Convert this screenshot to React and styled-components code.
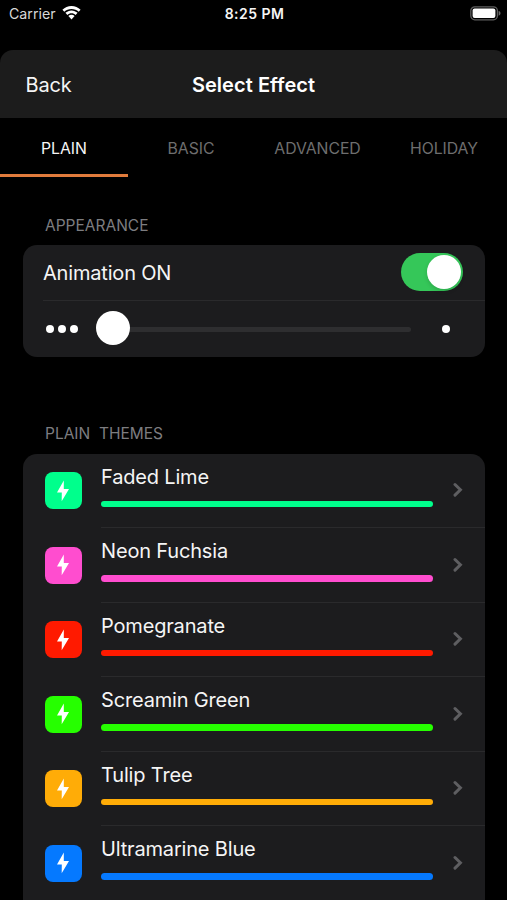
import { useState } from "react";
import styled, { createGlobalStyle } from "styled-components";

const themes = [
    { name: "Faded Lime", color: "#00FF8C" },
    { name: "Neon Fuchsia", color: "#FF4DCF" },
    { name: "Pomegranate", color: "#FF1A00" },
    { name: "Screamin Green", color: "#26FF00" },
    { name: "Tulip Tree", color: "#FFAC07" },
    { name: "Ultramarine Blue", color: "#0579FF" },
];

const tabs = ["PLAIN", "BASIC", "ADVANCED", "HOLIDAY"];

export default function App() {
    const [activeTab, setActiveTab] = useState("PLAIN");
    const [animated, setAnimated] = useState(true);

    return (
        <Screen>
            <GlobalStyle />
            <StatusBar>
                <Carrier>
                    Carrier
                    <WifiIcon />
                </Carrier>
                <Clock>8:25 PM</Clock>
                <BatterySlot>
                    <BatteryIcon />
                </BatterySlot>
            </StatusBar>
            <Header>
                <BackButton>Back</BackButton>
                <HeaderTitle>Select Effect</HeaderTitle>
            </Header>
            <TabBar>
                {tabs.map((tab) => (
                    <Tab key={tab} $active={tab === activeTab} onClick={() => setActiveTab(tab)}>
                        {tab}
                    </Tab>
                ))}
            </TabBar>
            <SectionTitle>APPEARANCE</SectionTitle>
            <AppearanceCard>
                <AnimationRow>
                    <AnimationLabel>Animation {animated ? "ON" : "OFF"}</AnimationLabel>
                    <Switch $on={animated} onClick={() => setAnimated(!animated)}>
                        <SwitchKnob />
                    </Switch>
                </AnimationRow>
                <SliderRow>
                    <Dots>
                        <Dot />
                        <Dot />
                        <Dot />
                    </Dots>
                    <Slider>
                        <SliderThumb />
                        <SliderTrack />
                    </Slider>
                    <Dot />
                </SliderRow>
            </AppearanceCard>
            <ThemesTitle>PLAIN&nbsp; THEMES</ThemesTitle>
            <ThemeList>
                {themes.map((theme) => (
                    <ThemeRow key={theme.name}>
                        <ThemeIcon $color={theme.color}>
                            <BoltIcon />
                        </ThemeIcon>
                        <ThemeBody>
                            <ThemeInfo>
                                <ThemeName>{theme.name}</ThemeName>
                                <ThemeBar $color={theme.color} />
                            </ThemeInfo>
                            <ChevronIcon />
                        </ThemeBody>
                    </ThemeRow>
                ))}
            </ThemeList>
        </Screen>
    );
}

function WifiIcon() {
    return (
        <svg width="19" height="14" viewBox="0 0 19 14" fill="#FFFFFF">
            <path d="M9.5 0C6 0 2.8 1.4 0.4 3.700L2.300 5.700C4.200 3.900 6.700 3 9.500 3s5.300.9 7.200 2.700l1.900-2C16.200 1.400 13 0 9.500 0z" />
            <path d="M9.500 4.400C7.200 4.400 5.100 5.300 3.400 6.800L5.400 8.900C6.500 7.900 7.900 7.300 9.500 7.300s3 .6 4.100 1.600l2-2.100C13.900 5.300 11.800 4.400 9.500 4.400z" />
            <path d="M9.500 8.800C8.300 8.800 7.200 9.200 6.400 10L9.500 13.400l3.100-3.400C11.800 9.200 10.700 8.800 9.500 8.800z" />
        </svg>
    );
}

function BatteryIcon() {
    return (
        <svg width="31" height="15" viewBox="0 0 31 15">
            <rect x="0.8" y="0.8" width="26.6" height="13" rx="4" fill="none" stroke="#5F5F5F" strokeWidth="1.3" />
            <rect x="2.6" y="2.6" width="22.8" height="9.4" rx="2" fill="#FFFFFF" />
            <path d="M28.6 4.9c1.3.3 1.9 1.2 1.9 2.4s-.6 2.1-1.9 2.4z" fill="#6A6A6A" />
        </svg>
    );
}

function BoltIcon() {
    return (
        <svg width="14" height="22" viewBox="0 0 14 22" fill="#FFFFFF">
            <path d="M7.8 .6L1 12.400h4.800L5.700 21.200L13 8.900H7.800z" />
        </svg>
    );
}

function ChevronIcon() {
    return (
        <svg
            width="11"
            height="16"
            viewBox="0 0 11 16"
            fill="none"
            stroke="#5E5E61"
            strokeWidth="3"
            strokeLinecap="round"
        >
            <path d="M2 2.500l5.400 5.300l-5.400 5.300" />
        </svg>
    );
}

const GlobalStyle = createGlobalStyle`
    * {
        box-sizing: border-box;
    }

    body {
        margin: 0;
        background: #000000;
        font-family: Inter, "Liberation Sans", sans-serif;
        color: #F5F5F5;
    }

    button {
        margin: 0;
        padding: 0;
        border: none;
        background: none;
        font-family: inherit;
        color: inherit;
    }

    svg {
        display: block;
        flex-shrink: 0;
    }
`;

const Screen = styled.div`
    width: 507px;
    height: 900px;
    overflow: hidden;
    background: #000000;
`;

const StatusBar = styled.div`
    display: grid;
    grid-template-columns: 1fr auto 1fr;
    align-items: center;
    height: 50px;
    padding: 0 6px 24px 9px;
`;

const Carrier = styled.div`
    display: flex;
    align-items: center;
    gap: 6px;
    font-size: 14.2px;
    color: #D8D8D8;
`;

const Clock = styled.div`
    margin: 1px 1px 0 0;
    font-size: 14px;
    font-weight: 600;
    letter-spacing: 0.45px;
`;

const BatterySlot = styled.div`
    display: flex;
    justify-content: flex-end;
`;

const Header = styled.div`
    display: grid;
    grid-template-columns: 1fr auto 1fr;
    align-items: center;
    height: 68px;
    padding: 1px 25.5px 0;
    border-radius: 13px 13px 0 0;
    background: #1C1C1C;
`;

const BackButton = styled.button`
    justify-self: start;
    font-size: 20px;
    line-height: 24px;
    letter-spacing: -0.2px;
`;

const HeaderTitle = styled.div`
    font-size: 20px;
    font-weight: 600;
    line-height: 24px;
    letter-spacing: 0.05px;
    color: #FFFFFF;
`;

const TabBar = styled.div`
    display: grid;
    grid-template-columns: 128px 126px 127px 126px;
    height: 59px;
`;

const Tab = styled.button`
    padding-top: 4px;
    border-bottom: 3px solid ${({ $active }) => ($active ? "#E07B3C" : "transparent")};
    font-size: 15.8px;
    letter-spacing: -0.05px;
    color: ${({ $active }) => ($active ? "#F5F5F5" : "#6E6E6E")};
`;

const SectionTitle = styled.div`
    padding: 39px 45px 0;
    height: 68px;
    font-size: 15.5px;
    line-height: 20px;
    color: #7D7D80;
`;

const ThemesTitle = styled(SectionTitle)`
    padding-top: 67px;
    height: 96.5px;
`;

const Card = styled.div`
    margin: 0 22px 0 23px;
    border-radius: 14px;
    background: #1C1C1E;
`;

const AppearanceCard = styled(Card)`
    height: 112px;
    padding-left: 20px;
`;

const AnimationRow = styled.div`
    display: flex;
    align-items: center;
    justify-content: space-between;
    height: 56px;
    padding-right: 22px;
    border-bottom: 1px solid #2A2A2C;
`;

const AnimationLabel = styled.div`
    font-size: 20px;
    letter-spacing: -0.18px;
`;

const Switch = styled.button`
    display: flex;
    align-items: center;
    justify-content: ${({ $on }) => ($on ? "flex-end" : "flex-start")};
    width: 62.5px;
    height: 38px;
    margin-top: -1px;
    padding: 0 2px;
    border-radius: 19px;
    background: ${({ $on }) => ($on ? "#35C759" : "#39393D")};
`;

const SwitchKnob = styled.div`
    width: 34px;
    height: 34px;
    border-radius: 50%;
    background: #FFFFFF;
    box-shadow: 0 2px 4px rgba(0, 0, 0, 0.15);
`;

const SliderRow = styled.div`
    display: flex;
    align-items: center;
    height: 56px;
    padding: 0 35.5px 0 3px;
`;

const Dots = styled.div`
    display: flex;
    gap: 4px;
`;

const Dot = styled.div`
    width: 8px;
    height: 8px;
    border-radius: 50%;
    background: #FFFFFF;
`;

const Slider = styled.div`
    display: flex;
    align-items: center;
    flex: 1;
    height: 34px;
    margin: -2px 31px 0 18px;
`;

const SliderThumb = styled.div`
    width: 34px;
    height: 34px;
    border-radius: 50%;
    background: #FFFFFF;
`;

const SliderTrack = styled.div`
    flex: 1;
    height: 5px;
    margin-top: 2px;
    border-radius: 0 3px 3px 0;
    background: #2E2E30;
`;

const ThemeList = styled(Card)`
    padding: 0 0 20px 22px;
`;

const ThemeRow = styled.div`
    display: flex;
    align-items: center;
    height: 74.5px;
`;

const ThemeIcon = styled.div`
    display: flex;
    align-items: center;
    justify-content: center;
    width: 37px;
    height: 37px;
    padding-right: 1px;
    border-radius: 8px;
    background: ${({ $color }) => $color};
`;

const ThemeBody = styled.div`
    display: flex;
    align-items: center;
    justify-content: space-between;
    flex: 1;
    height: 100%;
    margin-left: 19px;
    padding-right: 21px;
    border-bottom: 1px solid #2A2A2C;
`;

const ThemeInfo = styled.div`
    width: 331.5px;
    padding-bottom: 9px;
`;

const ThemeName = styled.div`
    font-size: 20px;
    line-height: 24px;
    letter-spacing: -0.17px;
`;

const ThemeBar = styled.div`
    height: 6.5px;
    margin-top: 12px;
    border-radius: 4px;
    background: ${({ $color }) => $color};
`;
